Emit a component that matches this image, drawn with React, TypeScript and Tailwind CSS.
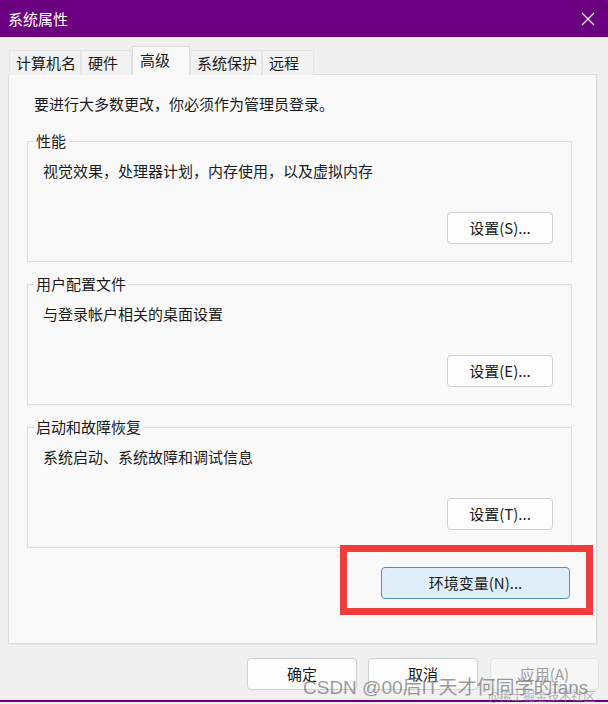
import React from "react";

const font = { fontFamily: '"Noto Sans CJK SC", "Noto Sans", sans-serif' };

const tabs = [
  { label: "计算机名", w: "w-[72px]", active: false },
  { label: "硬件", w: "w-[51px]", active: false },
  { label: "高级", w: "w-[58px]", active: true },
  { label: "系统保护", w: "w-[72px]", active: false },
  { label: "远程", w: "w-[52px]", active: false },
];

const groups = [
  { title: "性能", desc: "视觉效果，处理器计划，内存使用，以及虚拟内存", btn: "设置(S)..." },
  { title: "用户配置文件", desc: "与登录帐户相关的桌面设置", btn: "设置(E)..." },
  { title: "启动和故障恢复", desc: "系统启动、系统故障和调试信息", btn: "设置(T)..." },
];

const WinButton = ({ children, className = "" }: { children: React.ReactNode; className?: string }) => (
  <button
    className={`flex h-[32px] items-center justify-center rounded-[4px] border border-[#d0d0d0] bg-[#fdfdfd] text-[15px] leading-[20px] text-[#1a1a1a] ${className}`}
  >
    {children}
  </button>
);

export default function App() {
  return (
    <div className="flex h-[704px] w-[608px] flex-col overflow-hidden bg-[#f0f0f0]" style={font}>
      {/* title bar */}
      <div className="flex h-[37px] shrink-0 items-center justify-between bg-[#6b0080] pl-[8px] pr-[13px] text-white">
        <span className="text-[15px] leading-[20px]">系统属性</span>
        <svg width="14" height="14" viewBox="0 0 14 14" fill="none" stroke="white" strokeWidth="1.1">
          <path d="M1 1 L13 13 M13 1 L1 13" />
        </svg>
      </div>

      {/* tabs */}
      <div className="relative z-10 -mb-px ml-[9px] mt-[9px] flex items-end">
        {tabs.map((t) =>
          t.active ? (
            <div
              key={t.label}
              className={`${t.w} h-[29px] border border-b-0 border-[#dcdcdc] bg-[#f9f9f9] pl-[7px] pt-[3px] text-[15px] leading-[20px] text-[#1a1a1a]`}
            >
              {t.label}
            </div>
          ) : (
            <div
              key={t.label}
              className={`${t.w} h-[25px] border border-b-0 border-[#e4e4e4] bg-[#f2f2f2] pl-[6px] pt-[2px] text-[15px] leading-[20px] text-[#1a1a1a]`}
            >
              {t.label}
            </div>
          )
        )}
      </div>

      {/* panel */}
      <div className="ml-[8px] h-[570px] w-[589px] shrink-0 border border-[#dcdcdc] bg-[#f9f9f9] pl-[18px] pt-[19px] shadow-[1px_1px_0_#e6e6e6]">
        <p className="ml-[7px] text-[15px] leading-[20px] text-[#1a1a1a]">要进行大多数更改，你必须作为管理员登录。</p>

        <div className="mt-[17px] flex w-[545px] flex-col gap-[12px]">
          {groups.map((g) => (
            <fieldset key={g.title} className="border border-[#dcdcdc] pb-[17px]">
              <legend className="ml-[6px] px-[2px] text-[15px] leading-[20px] text-[#1a1a1a]">{g.title}</legend>
              <p className="mt-[10px] pl-[15px] text-[15px] leading-[20px] text-[#1a1a1a]">{g.desc}</p>
              <div className="mt-[31px] flex justify-end pr-[18px]">
                <WinButton className="w-[106px]">{g.btn}</WinButton>
              </div>
            </fieldset>
          ))}
        </div>

        <div className="mt-[19px] flex w-[545px] justify-end pr-[2px]">
          <div className="relative">
            <button className="flex h-[32px] w-[189px] items-center justify-center rounded-[4px] border border-[#4f8fd0] bg-[#e0eef9] text-[15px] leading-[20px] text-[#1a1a1a]">
              环境变量(N)...
            </button>
            <div className="pointer-events-none absolute -left-[41px] -top-[22px] h-[70px] w-[253px] border-[7px] border-[#f23c3c]" />
          </div>
        </div>
      </div>

      {/* footer buttons */}
      <div className="relative mt-[14px] flex justify-end pr-[9px]">
        <WinButton className="w-[110px]">确定</WinButton>
        <WinButton className="ml-[11px] w-[110px]">取消</WinButton>
        <button className="ml-[12px] flex h-[32px] w-[109px] items-center justify-center rounded-[4px] border border-[#e3e3e3] bg-[#f6f6f6] text-[15px] leading-[20px] text-[#9e9e9e]">
          应用(A)
        </button>
        <span
          className="pointer-events-none absolute left-[303px] top-[19px] whitespace-nowrap text-[19px] leading-[22px] text-[#6e6e6e]/70"
          style={{ fontFamily: '"Liberation Sans", "Noto Sans CJK SC", sans-serif' }}
        >
          CSDN @00后IT天才何同学的fans
        </span>
        <span className="pointer-events-none absolute left-[488px] top-[31px] whitespace-nowrap text-[12px] leading-[14px] text-[#8a8a8a]/60">
          @稀土掘金技术社区
        </span>
      </div>

      <div className="mt-auto mb-[2px] h-[2px] bg-[#6b0080]" />
    </div>
  );
}
